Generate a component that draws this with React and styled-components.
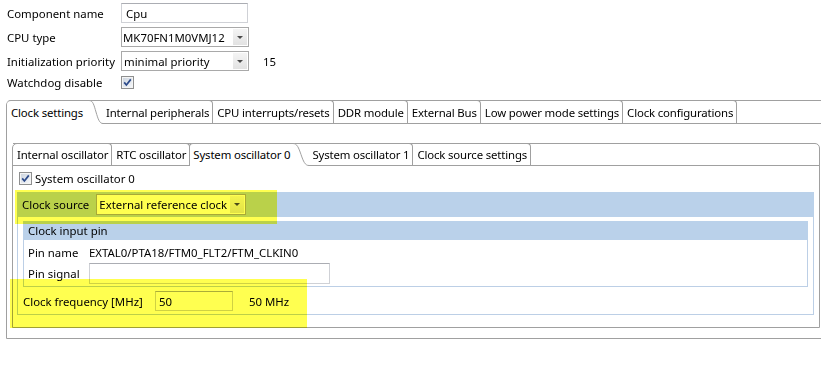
import React from 'react';
import styled, { createGlobalStyle } from 'styled-components';

const Global = createGlobalStyle`
  html, body { margin: 0; padding: 0; background: #fff; overflow: hidden; }
  body {
    font-family: "Noto Sans", "Segoe UI", sans-serif;
    font-size: 11.4px;
    line-height: 15px;
    color: #000;
  }
  * { box-sizing: border-box; }
`;

const BORDER = '#a0a0a0';
const BLUE = '#bad1ea';
const BLUE_BORDER = '#bccfe6';

const Page = styled.div`
  position: relative;
  width: 821px;
  height: 385px;
  overflow: hidden;
  padding: 3px 0 0 6px;
`;

const Form = styled.div`
  display: grid;
  grid-template-columns: 114px max-content max-content;
  row-gap: 4px;
  align-items: center;
  padding-left: 1px;
`;

const Label = styled.span`
  white-space: nowrap;
`;

const TextInput = styled.div`
  width: ${p => p.$w}px;
  height: ${p => p.$h || 20}px;
  border: 1px solid #cfd1d6;
  border-top-color: #abadb3;
  background: #fff;
  display: flex;
  align-items: center;
  padding-left: ${p => (p.$pl ?? 4)}px;
  white-space: nowrap;
`;

const Combo = styled.div`
  display: flex;
  align-items: stretch;
  width: ${p => p.$w}px;
  height: ${p => p.$h || 20}px;
  border: 1px solid #a9a9a9;
  background: #fff;
`;

const ComboText = styled.span`
  flex: 1;
  display: flex;
  align-items: center;
  padding-left: ${p => p.$pl ?? 2}px;
  white-space: nowrap;
  overflow: hidden;
`;

const ComboBtn = styled.span`
  width: 14px;
  margin: 1px;
  background: linear-gradient(#f4f4f4, #e2e2e2);
  display: flex;
  align-items: center;
  justify-content: center;
  &::after {
    content: '';
    border-left: 3px solid transparent;
    border-right: 3px solid transparent;
    border-top: 3px solid #4a4a4a;
  }
`;

const Extra = styled.span`
  padding-left: 14px;
`;

const CheckBoxSvg = styled.svg`
  display: block;
  flex-shrink: 0;
`;

const CheckBox = () => (
  <CheckBoxSvg width="13" height="13" viewBox="0 0 13 13">
    <defs>
      <linearGradient id="cbg" x1="0" y1="0" x2="1" y2="1">
        <stop offset="0" stopColor="#cdd5df" />
        <stop offset="1" stopColor="#f4f6f9" />
      </linearGradient>
    </defs>
    <rect x="0.5" y="0.5" width="12" height="12" fill="#f4f4f4" stroke="#8e8f8f" />
    <rect x="2" y="2" width="9" height="9" fill="url(#cbg)" />
    <path d="M3.2 6.4 L5.4 9 L9.8 3.4" fill="none" stroke="#2c4a8a" strokeWidth="1.7" />
  </CheckBoxSvg>
);

const CheckCell = styled.div`
  height: 13px;
  display: flex;
  align-items: center;
`;

const Folder = styled.div`
  display: flex;
  flex-direction: column;
  width: ${p => p.$w}px;
  border: 1px solid ${BORDER};
  border-radius: 5px 5px 0 0;
  margin-top: ${p => p.$mt || 0}px;
  background: #fff;
`;

const TabRow = styled.div`
  display: flex;
  align-items: flex-start;
  height: ${p => p.$h}px;
  border-bottom: 1px solid ${BORDER};
  flex-shrink: 0;
  letter-spacing: -0.15px;
`;

const Tab = styled.div`
  display: flex;
  align-items: center;
  height: ${p => p.$h}px;
  margin-top: -1px;
  padding: 0 3px 0 ${p => p.$pl || 4}px;
  border-top: 1px solid ${BORDER};
  border-right: 1px solid ${BORDER};
  border-top-right-radius: 4px;
  white-space: nowrap;
`;

const SelWrap = styled.div`
  display: flex;
  height: ${p => p.$h + 1}px;
  margin-top: -1px;
  margin-left: ${p => (p.$first ? 0 : -1)}px;
  position: relative;
  z-index: 1;
`;

const SelBody = styled.div`
  display: flex;
  align-items: center;
  background: #fff;
  border-top: 1px solid ${BORDER};
  border-left: ${p => (p.$first ? 'none' : `1px solid ${BORDER}`)};
  border-top-left-radius: 4px;
  padding: 0 ${p => p.$pr}px 1px ${p => p.$pl}px;
  white-space: nowrap;
`;

const CurveSvg = styled.svg`
  display: block;
  flex-shrink: 0;
`;

const Curve = ({ h, w }) => {
  const H = h + 1;
  const c = `M0,0.5 C4,0.5 ${w * 0.35},${H * 0.2} ${w * 0.5},${H * 0.5} S${w * 0.75},${H - 0.5} ${w},${H - 0.5}`;
  return (
    <CurveSvg width={w} height={H} viewBox={`0 0 ${w} ${H}`}>
      <path d={`${c} L${w},${H} L0,${H} Z`} fill="#fff" />
      <path d={c} fill="none" stroke={BORDER} strokeWidth="1" />
    </CurveSvg>
  );
};

const Tabs = ({ items, selected, h, curveW, selPr }) => (
  <TabRow $h={h}>
    {items.map((t, i) => {
      if (i === selected) {
        return (
          <SelWrap key={t} $h={h} $first={i === 0}>
            <SelBody $first={i === 0} $pl={i === 0 ? 4 : 3} $pr={selPr}>{t}</SelBody>
            <Curve h={h} w={curveW} />
          </SelWrap>
        );
      }
      return (
        <Tab key={t} $h={h} $pl={i === selected + 1 ? 3 : 4}>{t}</Tab>
      );
    })}
  </TabRow>
);

const OuterBody = styled.div`
  padding: 19px 5px 10px 5px;
`;

const Pane = styled.div`
  display: flex;
  flex-direction: column;
  padding: 6px 5px 12px 4px;
`;

const CheckRow = styled.div`
  display: flex;
  align-items: center;
  gap: 3px;
  height: 13px;
  padding-left: 2px;
  margin-bottom: 7px;
`;

const Group = styled.div`
  border: 1px solid ${BLUE_BORDER};
  display: flex;
  flex-direction: column;
`;

const Band = styled.div`
  display: flex;
  align-items: center;
  gap: ${p => p.$gap || 0}px;
  height: ${p => p.$h}px;
  margin: -1px -1px 0 -1px;
  padding-left: 5px;
  background: ${BLUE};
  white-space: nowrap;
`;

const GroupBody = styled.div`
  display: flex;
  flex-direction: column;
  padding: 4px 5px 3px 5px;
`;

const PinGrid = styled.div`
  display: grid;
  grid-template-columns: 61px max-content;
  grid-template-rows: 18px 21px;
  row-gap: 2px;
  align-items: center;
  padding: 3px 0 2px 4px;
`;

const FreqRow = styled.div`
  display: flex;
  align-items: center;
  height: 20px;
  margin-top: 4px;
`;

const FreqLabel = styled.span`
  width: 132px;
  white-space: nowrap;
`;

const Unit = styled.span`
  padding-left: 16px;
`;

const Highlight = styled.div`
  position: absolute;
  left: ${p => p.$x}px;
  top: ${p => p.$y}px;
  width: ${p => p.$w}px;
  height: ${p => p.$h}px;
  background: #ffff50;
  mix-blend-mode: multiply;
  pointer-events: none;
`;

export default function App() {
  return (
    <>
      <Global />
      <Page>
        <Form>
          <Label>Component name</Label>
          <TextInput $w={127}>Cpu</TextInput>
          <span />
          <Label>CPU type</Label>
          <Combo $w={128}>
            <ComboText $pl={1}>MK70FN1M0VMJ12</ComboText>
            <ComboBtn />
          </Combo>
          <span />
          <Label>Initialization priority</Label>
          <Combo $w={128}>
            <ComboText $pl={2}>minimal priority</ComboText>
            <ComboBtn />
          </Combo>
          <Extra>15</Extra>
          <Label>Watchdog disable</Label>
          <CheckCell><CheckBox /></CheckCell>
          <span />
        </Form>

        <Folder $w={820} $mt={10}>
          <Tabs
            h={23}
            selected={0}
            curveW={14}
            selPr={6}
            items={[
              'Clock settings',
              'Internal peripherals',
              'CPU interrupts/resets',
              'DDR module',
              'External Bus',
              'Low power mode settings',
              'Clock configurations',
            ]}
          />
          <OuterBody>
            <Folder $w={808}>
              <Tabs
                h={22}
                selected={2}
                curveW={16}
                selPr={3}
                items={[
                  'Internal oscillator',
                  'RTC oscillator',
                  'System oscillator 0',
                  'System oscillator 1',
                  'Clock source settings',
                ]}
              />
              <Pane>
                <CheckRow>
                  <CheckBox />
                  <span>System oscillator 0</span>
                </CheckRow>
                <Group>
                  <Band $h={25} $gap={7}>
                    <span>Clock source</span>
                    <Combo $w={150} $h={21}>
                      <ComboText $pl={2}>External reference clock</ComboText>
                      <ComboBtn />
                    </Combo>
                  </Band>
                  <GroupBody>
                    <Group>
                      <Band $h={19}>Clock input pin</Band>
                      <PinGrid>
                        <Label>Pin name</Label>
                        <span>EXTAL0/PTA18/FTM0_FLT2/FTM_CLKIN0</span>
                        <Label>Pin signal</Label>
                        <TextInput $w={241} $h={21} />
                      </PinGrid>
                    </Group>
                    <FreqRow>
                      <FreqLabel>Clock frequency [MHz]</FreqLabel>
                      <TextInput $w={78} $pl={3}>50</TextInput>
                      <Unit>50 MHz</Unit>
                    </FreqRow>
                  </GroupBody>
                </Group>
              </Pane>
            </Folder>
          </OuterBody>
        </Folder>

        <Highlight $x={15} $y={190} $w={262} $h={34} />
        <Highlight $x={10} $y={279} $w={297} $h={49} />
      </Page>
    </>
  );
}
